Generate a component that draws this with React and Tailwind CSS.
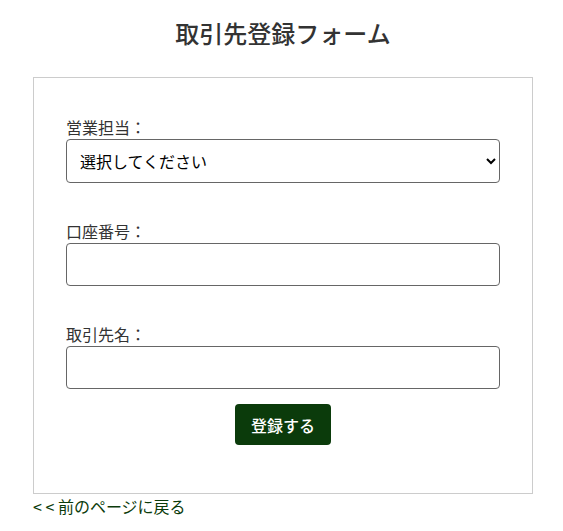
import React from 'react';

const font = { fontFamily: '"Noto Sans CJK JP", "Noto Sans", sans-serif' };

export default function App() {
  return (
    <div className="min-h-screen bg-white text-[#333] text-[16px] leading-6" style={font}>
      <div className="w-[500px] ml-[33px]">
        <h2 className="pt-[15px] text-center text-[24px] leading-9 font-medium text-[#333]">
          取引先登録フォーム
        </h2>

        <form className="mt-[26px] border border-[#ccc] px-8 pt-[37px] pb-[48px]" onSubmit={(e) => e.preventDefault()}>
          <Field label="営業担当：">
            <select className="block w-full h-[44px] border border-[#666] rounded-[4px] bg-white pl-[9px] pr-2 text-[16px] text-black" style={font}>
              <option>選択してください</option>
            </select>
          </Field>

          <div className="h-[36px]" />

          <Field label="口座番号：">
            <input type="text" className={inputClass} style={font} />
          </Field>

          <div className="h-[36px]" />

          <Field label="取引先名：">
            <input type="text" className={inputClass} style={font} />
          </Field>

          <div className="flex justify-center mt-[15px]">
            <button
              type="submit"
              className="h-[41px] px-4 rounded-[4px] bg-[#0b3b0b] text-white text-[16px] leading-6 font-medium"
              style={font}
            >
              登録する
            </button>
          </div>
        </form>

        <a href="#" className="block text-[#0b3b0b] text-[16px] leading-6">
          &lt; &lt; 前のページに戻る
        </a>
      </div>
    </div>
  );
}

const inputClass = 'block w-full h-[43px] border border-[#666] rounded-[4px] bg-white px-3 text-[16px] text-black';

function Field({ label, children }) {
  return (
    <div>
      <label className="block text-[16px] leading-6 text-[#333]">{label}</label>
      {children}
    </div>
  );
}
